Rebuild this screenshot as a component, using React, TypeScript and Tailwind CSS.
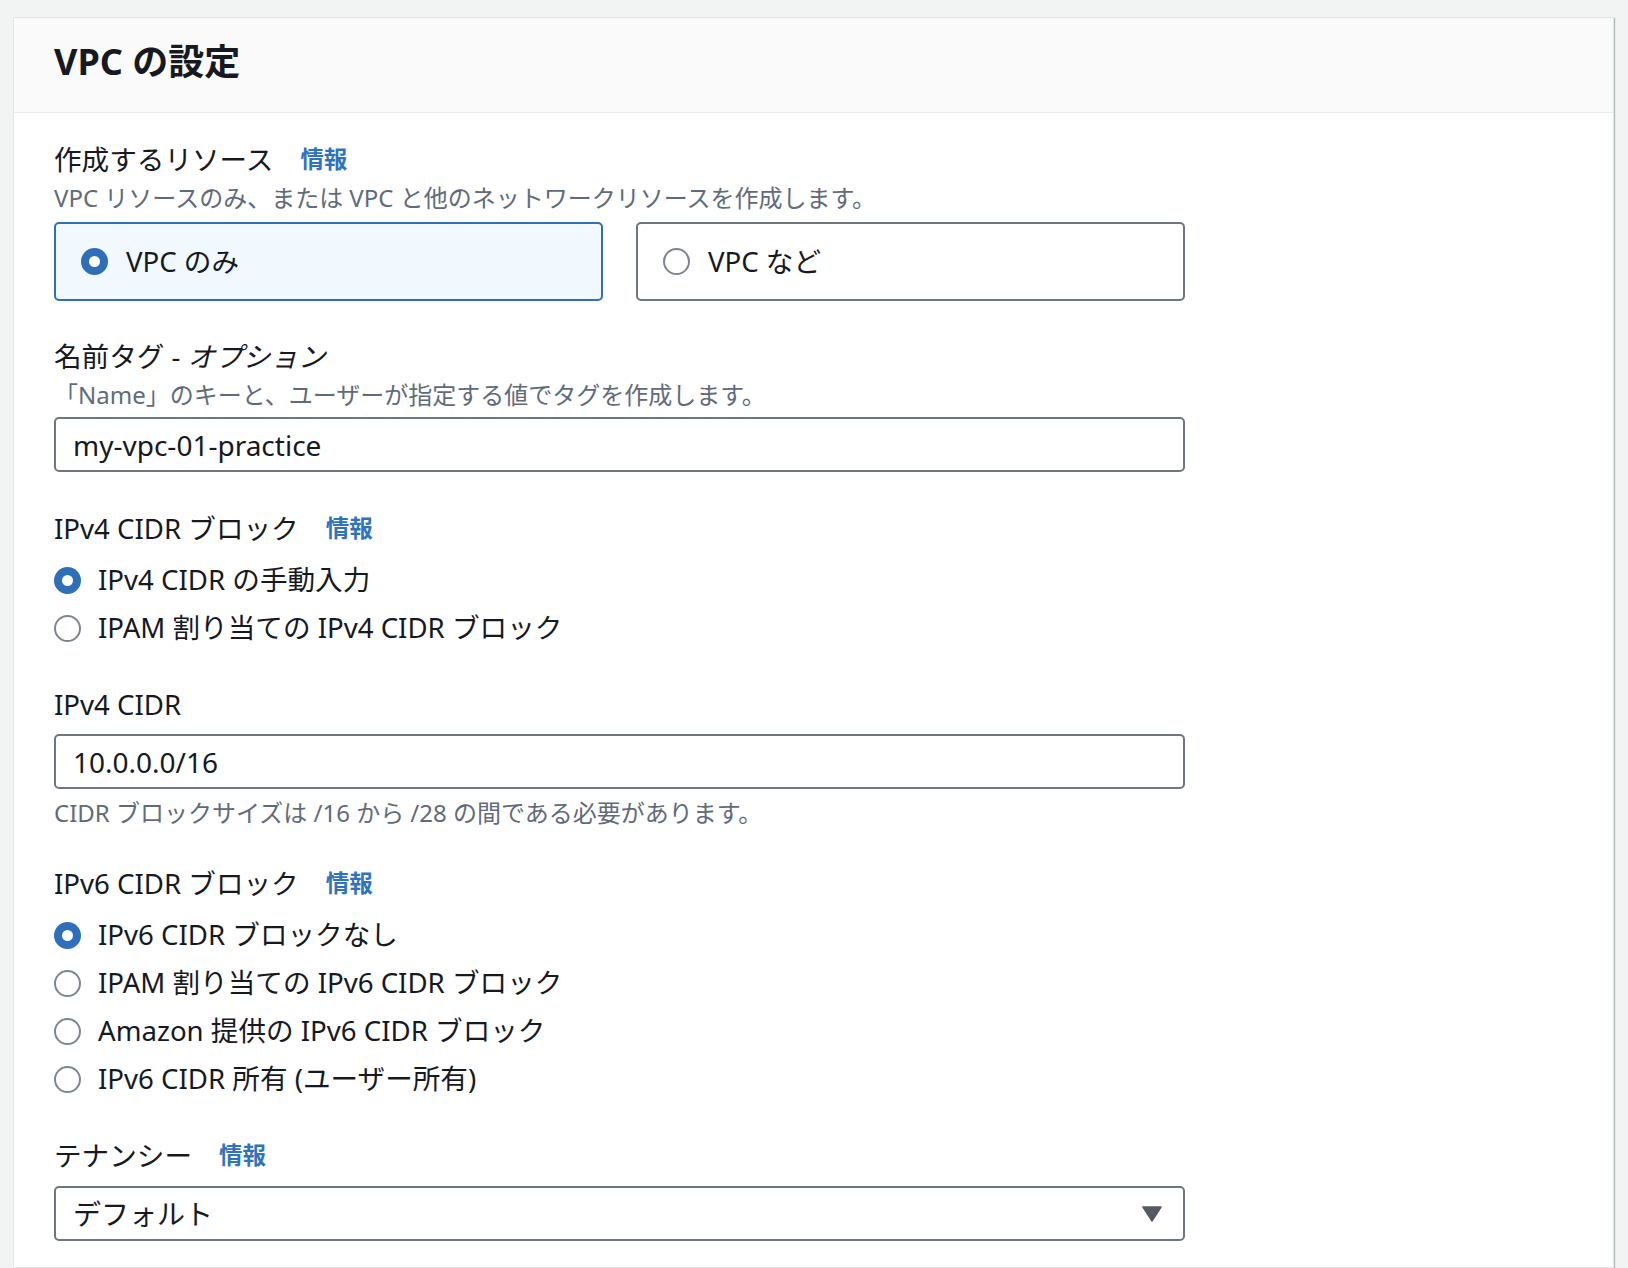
import React from "react";

const FONT = { fontFamily: '"Noto Sans", "Noto Sans CJK JP", sans-serif' };

function Radio({ checked }: { checked: boolean }) {
  if (checked) {
    return (
      <span className="flex h-[27px] w-[27px] shrink-0 items-center justify-center rounded-full bg-[#2f6fba]">
        <span className="h-[11px] w-[11px] rounded-full bg-white" />
      </span>
    );
  }
  return <span className="h-[27px] w-[27px] shrink-0 rounded-full border-[2.5px] border-[#7d8590] bg-white" />;
}

function Info() {
  return <span className="ml-[27px] text-[23.5px] font-bold text-[#2f72be]">情報</span>;
}

function Label({ children, className = "" }: { children: React.ReactNode; className?: string }) {
  return (
    <div className={`flex h-[36px] items-center text-[27.6px] leading-[36px] text-[#16191f] ${className}`}>{children}</div>
  );
}

function Desc({ children, className = "" }: { children: React.ReactNode; className?: string }) {
  return <div className={`h-[36px] text-[24px] leading-[36px] text-[#5f6b7a] ${className}`}>{children}</div>;
}

function Option({ checked, label }: { checked: boolean; label: string }) {
  return (
    <div className="flex h-[48px] items-center">
      <Radio checked={checked} />
      <span className="ml-[17px] text-[27.6px] text-[#16191f]">{label}</span>
    </div>
  );
}

export default function App() {
  return (
    <div className="min-h-[1268px] bg-[#f2f3f3] pl-[13px] pr-[14px] pt-[17px]" style={FONT}>
      <div className="min-h-[1251px] border border-[#e3e6e8] bg-white shadow-[1px_1px_1px_0_rgba(0,28,36,0.25)]">
        <div className="h-[95px] border-b border-[#e9ebed] bg-[#fafafa] pl-[40px] pt-[22px]">
          <h2 className="text-[36px] font-bold leading-[44px] text-[#16191f]">VPC の設定</h2>
        </div>
        <div className="pl-[40px] pt-[28px]">
          <Label>
            作成するリソース<Info />
          </Label>
          <Desc className="mt-[3px]">VPC リソースのみ、または VPC と他のネットワークリソースを作成します。</Desc>
          <div className="mt-[6px] flex w-[1131px] gap-[33px]">
            <div className="flex h-[79px] w-[549px] items-center rounded-[5px] border-2 border-[#2f6fba] bg-[#f1f8fe] pl-[25px]">
              <Radio checked />
              <span className="ml-[18px] text-[27.6px] text-[#16191f]">VPC のみ</span>
            </div>
            <div className="flex h-[79px] w-[549px] items-center rounded-[5px] border-2 border-[#6f7680] bg-white pl-[25px]">
              <Radio checked={false} />
              <span className="ml-[18px] text-[27.6px] text-[#16191f]">VPC など</span>
            </div>
          </div>

          <Label className="mt-[37px]">
            名前タグ -&nbsp;<i>オプション</i>
          </Label>
          <Desc className="mt-[3px]">「Name」のキーと、ユーザーが指定する値でタグを作成します。</Desc>
          <div className="mt-[4px] flex h-[55px] w-[1131px] items-center rounded-[5px] border-2 border-[#6f7680] pl-[17px] text-[28px] text-[#16191f]">
            my-vpc-01-practice
          </div>

          <Label className="mt-[38px]">
            IPv4 CIDR ブロック<Info />
          </Label>
          <div className="mt-[10px]">
            <Option checked label="IPv4 CIDR の手動入力" />
            <Option checked={false} label="IPAM 割り当ての IPv4 CIDR ブロック" />
          </div>

          <Label className="mt-[34px]">IPv4 CIDR</Label>
          <div className="mt-[12px] flex h-[55px] w-[1131px] items-center rounded-[5px] border-2 border-[#6f7680] pl-[17px] text-[28px] text-[#16191f]">
            10.0.0.0/16
          </div>
          <Desc className="mt-[6px]">CIDR ブロックサイズは /16 から /28 の間である必要があります。</Desc>

          <Label className="mt-[34px]">
            IPv6 CIDR ブロック<Info />
          </Label>
          <div className="mt-[10px]">
            <Option checked label="IPv6 CIDR ブロックなし" />
            <Option checked={false} label="IPAM 割り当ての IPv6 CIDR ブロック" />
            <Option checked={false} label="Amazon 提供の IPv6 CIDR ブロック" />
            <Option checked={false} label="IPv6 CIDR 所有 (ユーザー所有)" />
          </div>

          <Label className="mt-[34px]">
            テナンシー<Info />
          </Label>
          <div className="mt-[13px] flex h-[55px] w-[1131px] items-center justify-between rounded-[5px] border-2 border-[#6f7680] pl-[17px] pr-[21px] text-[28px] text-[#16191f]">
            <span>デフォルト</span>
            <svg width="20" height="16" viewBox="0 0 20 16">
              <path d="M1 1 H19 L10 15 Z" fill="#545b64" stroke="#545b64" strokeWidth="1.5" strokeLinejoin="round" />
            </svg>
          </div>
        </div>
      </div>
    </div>
  );
}
